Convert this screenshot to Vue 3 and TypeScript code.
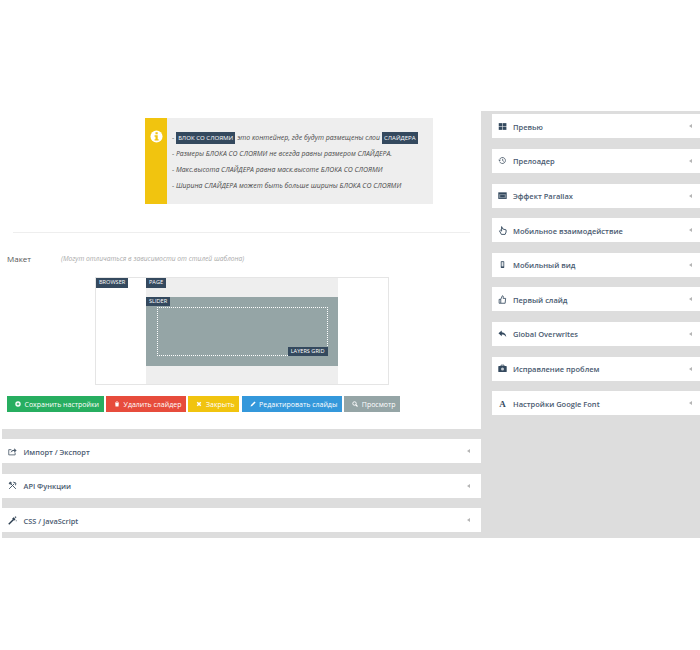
<script setup lang="ts">
const leftPanels = [
  { t: 'Импорт / Экспорт', i: 'share' },
  { t: 'API Функции', i: 'tools' },
  { t: 'CSS / JavaScript', i: 'wand' },
]
const rightPanels = [
  { t: 'Превью', i: 'grid' },
  { t: 'Прелоадер', i: 'history' },
  { t: 'Эффект Parallax', i: 'card' },
  { t: 'Мобильное взаимодействие', i: 'hand' },
  { t: 'Мобильный вид', i: 'phone' },
  { t: 'Первый слайд', i: 'thumb' },
  { t: 'Global Overwrites', i: 'reply' },
  { t: 'Исправление проблем', i: 'case' },
  { t: 'Настройки Google Font', i: 'font' },
]
</script>

<template>
  <div class="page">
    <div class="stage">
      <div class="left">
        <div class="main">
          <div class="alert">
            <div class="alert-side">
              <svg class="info" viewBox="0 0 14 14"><circle cx="7" cy="7" r="6.5" fill="#fff" /><rect x="5.9" y="2.4" width="2.4" height="2.2" fill="#f1c40f" /><path d="M4.9 5.7h3.4v4.2h1v1.5H4.9V9.9h1V7.2h-1z" fill="#f1c40f" /></svg>
            </div>
            <div class="alert-body">
              <p>- <span class="tag">БЛОК СО СЛОЯМИ</span> это контейнер, где будут размещены слои <span class="tag">СЛАЙДЕРА</span></p>
              <p>- Размеры БЛОКА СО СЛОЯМИ не всегда равны размером СЛАЙДЕРА.</p>
              <p>- Макс.высота СЛАЙДЕРА равна маск.высоте БЛОКА СО СЛОЯМИ</p>
              <p>- Ширина СЛАЙДЕРА может быть больше ширины БЛОКА СО СЛОЯМИ</p>
            </div>
          </div>
          <div class="rule"></div>
          <div class="layout-row">
            <span class="layout-label">Макет</span>
            <span class="layout-hint">(Могут отличаться в зависимости от стилей шаблона)</span>
          </div>
          <div class="diagram">
            <span class="mini browser">BROWSER</span>
            <div class="dia-page">
              <span class="mini page-tag">PAGE</span>
              <div class="dia-slider">
                <span class="mini slider-tag">SLIDER</span>
                <div class="dia-grid">
                  <span class="mini grid-tag">LAYERS GRID</span>
                </div>
              </div>
            </div>
          </div>
          <div class="buttons">
            <button class="btn green">
              <svg viewBox="0 0 12 12"><path fill-rule="evenodd" d="M6 .6a5.4 5.4 0 1 1 0 10.8A5.4 5.4 0 0 1 6 .6zm-1 2.7V5H3.3v2H5v1.700h2V7h1.700V5H7V3.300z" fill="#fff" /></svg>
              Сохранить настройки
            </button>
            <button class="btn red">
              <svg viewBox="0 0 12 12"><path d="M4.5.8h3l.5 1h2v1.400H2V1.800h2zM2.500 4h7L9 11.200H3z" fill="#fff" /></svg>
              Удалить слайдер
            </button>
            <button class="btn yellow">
              <svg viewBox="0 0 12 12"><path d="M2.500 2.500l7 7M9.500 2.500l-7 7" stroke="#fff" stroke-width="3" fill="none" /></svg>
              Закрыть
            </button>
            <button class="btn blue">
              <svg viewBox="0 0 12 12"><path d="M9 .8L11.200 3l-7 7L1 11l1-3.200z" fill="#fff" /></svg>
              Редактировать слайды
            </button>
            <button class="btn grey">
              <svg viewBox="0 0 12 12"><circle cx="5" cy="5" r="3.500" stroke="#fff" stroke-width="1.800" fill="none" /><path d="M7.500 7.500L11 11" stroke="#fff" stroke-width="2.200" /></svg>
              Просмотр
            </button>
          </div>
        </div>
        <div class="left-panels">
          <div v-for="p in leftPanels" :key="p.t" class="panel left-panel">
            <svg class="ico" viewBox="0 0 12 12">
              <g v-if="p.i === 'share'" fill="none" stroke="#4a5a6a" stroke-width="1.100">
                <path d="M9.500 7.500v3H1v-7h3.500" />
                <path d="M3.500 8c.3-3 2.300-4.300 4.800-4.300V1.500l3.200 3-3.200 3V5.400C6.200 5.400 4.800 6 3.500 8z" fill="#4a5a6a" stroke="none" />
              </g>
              <g v-else-if="p.i === 'tools'" fill="none" stroke="#4a5a6a" stroke-width="1.300">
                <path d="M1.500 10.500l7-7M2.500 2.500l8 8" />
                <path d="M.8 3.200L3 .8l2.500 1.700L3 5z" fill="#4a5a6a" stroke="none" />
                <path d="M7 1.500l3.500 1.200-.5 3" />
              </g>
              <g v-else>
                <path d="M1 11l6-6" stroke="#2c3e50" stroke-width="2" />
                <path d="M7.500 1.800L10 4.300l-2 2-2.500-2.500z" fill="#2c3e50" />
                <path d="M10 .5v2.400M11.200 1.700H8.800M11 5.500v1.600" stroke="#2c3e50" stroke-width=".8" />
              </g>
            </svg>
            <span class="panel-title">{{ p.t }}</span>
            <span class="arrow"></span>
          </div>
        </div>
      </div>
      <div class="right">
        <div v-for="p in rightPanels" :key="p.t" class="panel right-panel">
          <svg class="ico" viewBox="0 0 12 12">
            <g v-if="p.i === 'grid'" fill="#34495e">
              <rect x="1" y="1.500" width="4.800" height="4.200" /><rect x="6.400" y="1.500" width="4.800" height="4.200" />
              <rect x="1" y="6.300" width="4.800" height="4.200" /><rect x="6.400" y="6.300" width="4.800" height="4.200" />
            </g>
            <g v-else-if="p.i === 'history'" fill="none" stroke="#4a5a6a" stroke-width="1.100">
              <path d="M2.300 4.300A4 4 0 1 1 2.200 7.500" />
              <path d="M.3 5l1.900 1.900L4 5z" fill="#4a5a6a" stroke="none" />
              <path d="M6.200 3.800v2.400l1.600 1" />
            </g>
            <g v-else-if="p.i === 'card'">
              <rect x=".4" y="1.800" width="11.200" height="8.800" fill="#34495e" />
              <rect x="1.500" y="4.300" width="9" height="5.200" fill="#8a97a3" />
              <rect x="3" y="5.500" width="6" height="2.800" fill="#34495e" />
            </g>
            <g v-else-if="p.i === 'hand'" fill="none" stroke="#34495e" stroke-width="1.200">
              <path d="M4.800.8v6L3.200 5.500 2 6.500l2.500 4.700h5L10.800 8V5.200L8 4.400 6.500 4z" />
            </g>
            <g v-else-if="p.i === 'phone'">
              <rect x="3.700" y="1.500" width="4.600" height="9" rx=".9" fill="#34495e" />
              <rect x="4.700" y="2.800" width="2.600" height="5.800" fill="#dfe3e7" />
            </g>
            <g v-else-if="p.i === 'thumb'" fill="none" stroke="#34495e" stroke-width="1.100">
              <path d="M1.500 5.800h2.200V11H1.500zM3.700 5.800L5.800 1c1.500 0 1.500 1.300 1 3.500h3.400L9.500 11H3.700" />
            </g>
            <path v-else-if="p.i === 'reply'" d="M5 2L.6 5.800 5 9.500V7.200c2.600 0 4.200.6 6 3.300C10.700 6.700 8.700 4.500 5 4.200z" fill="#34495e" />
            <g v-else-if="p.i === 'case'">
              <rect x=".4" y="2.800" width="11.200" height="8" rx=".8" fill="#34495e" />
              <path d="M4 3V1.500h4V3" fill="none" stroke="#34495e" stroke-width="1.100" />
              <circle cx="6" cy="6.800" r="2" fill="#c5ccd3" />
            </g>
            <text v-else x="6" y="10.500" text-anchor="middle" class="ico-a">A</text>
          </svg>
          <span class="panel-title">{{ p.t }}</span>
          <span class="arrow"></span>
        </div>
      </div>
    </div>
  </div>
</template>

<style scoped>
.page {
  width: 700px;
  height: 650px;
  padding: 111px 0 0 2px;
  box-sizing: border-box;
  background: #fff;
  font-family: "Open Sans", "Noto Sans", sans-serif;
}
.stage {
  display: flex;
  height: 427px;
  background: #dddddd;
}
.left {
  width: 479px;
  flex: none;
  display: flex;
  flex-direction: column;
}
.main {
  height: 318px;
  background: #fff;
  box-sizing: border-box;
  padding-top: 7px;
}
.alert {
  display: flex;
  width: 288px;
  height: 86px;
  margin-left: 143px;
  background: #eeeeee;
}
.alert-side {
  width: 21.500px;
  flex: none;
  background: #f1c40f;
  display: flex;
  justify-content: center;
  padding: 12px 0 0 0.500px;
  box-sizing: border-box;
}
.info {
  width: 13px;
  height: 13px;
}
.alert-body {
  padding: 11.500px 0 0 5.500px;
  font-size: 6.900px;
  font-style: italic;
  color: #4a4a4a;
}
.alert-body p {
  margin: 0;
  height: 16px;
  line-height: 16px;
  white-space: nowrap;
}
.tag {
  display: inline-block;
  background: #34495e;
  color: #fff;
  font-style: normal;
  padding: 0 2.200px;
  line-height: 12px;
  font-size: 6.100px;
}
.rule {
  height: 1px;
  background: #eee;
  margin: 28px 0 0 11px;
  width: 457px;
}
.layout-row {
  display: flex;
  margin: 19px 0 0 5px;
  height: 12px;
  align-items: center;
}
.layout-label {
  width: 54px;
  font-size: 8px;
  color: #555;
}
.layout-hint {
  font-size: 6.700px;
  font-style: italic;
  color: #aaa;
}
.diagram {
  position: relative;
  width: 294px;
  height: 108px;
  margin: 13px 0 0 93px;
  box-sizing: border-box;
  border: 1px solid #e5e5e5;
  padding-left: 50px;
}
.dia-page {
  position: relative;
  width: 192px;
  height: 106px;
  background: #eeeeee;
  padding-top: 18.500px;
  box-sizing: border-box;
}
.dia-slider {
  position: relative;
  height: 69px;
  background: #95a5a6;
  padding: 10.500px 10.500px 0;
  box-sizing: border-box;
}
.dia-grid {
  position: relative;
  height: 49px;
  box-sizing: border-box;
  border: 1px dotted #fff;
}
.mini {
  position: absolute;
  background: #34495e;
  color: #fff;
  font-size: 5.600px;
  line-height: 9.500px;
  padding: 0 3px;
  white-space: nowrap;
}
.browser { left: 0; top: 0; }
.page-tag { left: 0; top: 0; }
.slider-tag { left: 0; top: 0; }
.grid-tag { right: -1px; bottom: -1px; }
.buttons {
  display: flex;
  gap: 2.500px;
  margin: 11px 0 0 5px;
}
.btn {
  height: 16px;
  border: 0;
  padding: 0 4.500px 0 8px;
  display: flex;
  align-items: center;
  gap: 3.500px;
  font-family: inherit;
  font-size: 7px;
  color: #fff;
  white-space: nowrap;
}
.btn svg { width: 6px; height: 6px; flex: none; }
.green { background: #27ae60; }
.red { background: #e74c3c; }
.yellow { background: #f1c40f; }
.blue { background: #3498db; }
.grey { background: #95a5a6; }
.left-panels {
  display: flex;
  flex-direction: column;
  gap: 10.500px;
  padding-top: 10px;
}
.panel {
  display: flex;
  align-items: center;
  background: #fff;
  height: 24px;
  box-sizing: border-box;
  flex: none;
}
.left-panel { padding: 0 11px 0 6px; }
.right {
  flex: 1;
  padding: 3.300px 0 0 11px;
  display: flex;
  flex-direction: column;
  gap: 10.620px;
}
.right-panel { padding: 0 8px 0 6px; }
.ico {
  width: 9px;
  height: 9px;
  flex: none;
  margin-right: 6px;
}
.left-panel .ico { margin-right: 6.500px; }
.ico-a {
  font-family: "Liberation Serif", serif;
  font-size: 12px;
  font-weight: 700;
  fill: #34495e;
}
.panel-title {
  flex: 1;
  font-size: 7.500px;
  font-weight: 600;
  color: #4a5a70;
  white-space: nowrap;
  padding-top: 1px;
}
.left-panel .panel-title { font-size: 7.400px; }
.arrow {
  width: 0;
  height: 0;
  border-style: solid;
  border-width: 2px 3px 2px 0;
  border-color: transparent #b5b5b5 transparent transparent;
}
</style>

<style>
html, body { margin: 0; background: #fff; }
</style>
